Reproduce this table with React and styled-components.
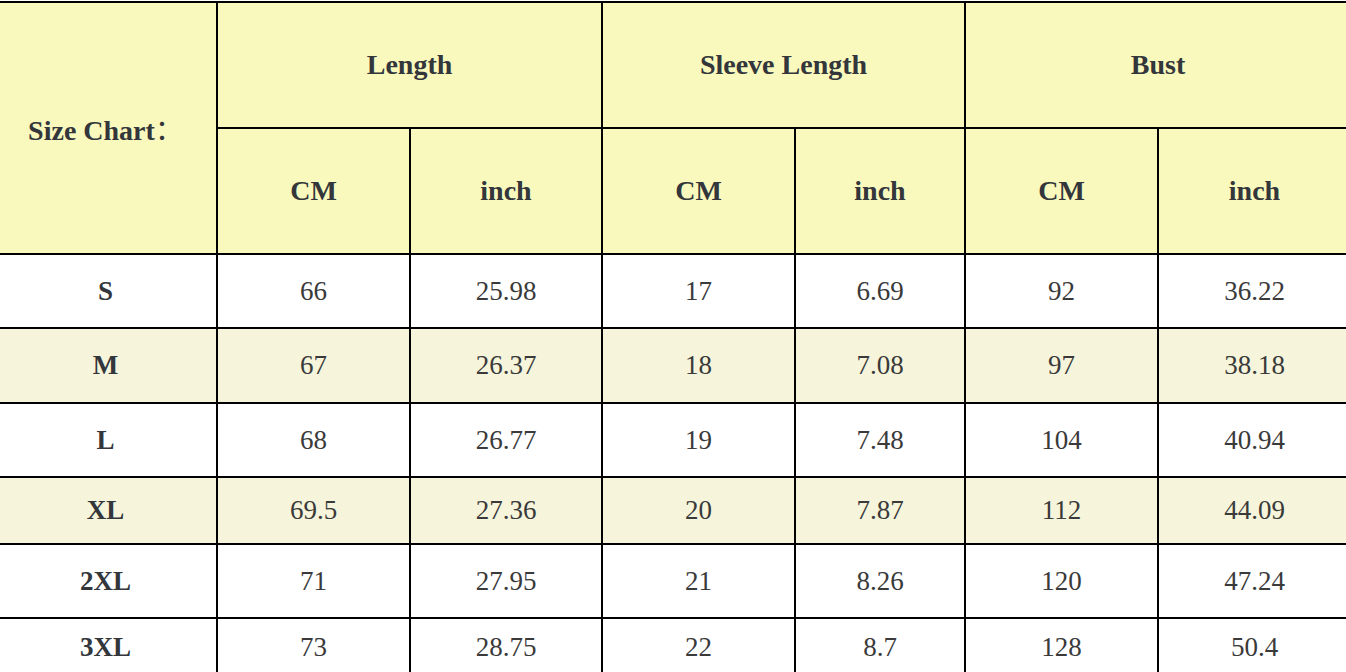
import React from 'react';
import styled, { createGlobalStyle } from 'styled-components';

const GlobalStyle = createGlobalStyle`
    html, body {
        margin: 0;
        padding: 0;
        background: #ffffff;
        overflow: hidden;
    }
    * {
        box-sizing: border-box;
    }
`;

const Page = styled.div`
    width: 1346px;
    height: 672px;
    overflow: hidden;
    padding-top: 1px;
    font-family: "Liberation Serif", "Noto Sans CJK SC", serif;
    color: #333333;
`;

const Table = styled.table`
    width: 1359px;
    min-width: 1359px;
    margin-left: -7px;
    border-collapse: separate;
    border-spacing: 0;
    table-layout: fixed;
    border-top: 2px solid #000;
    border-left: 2px solid #000;
`;

const Cell = styled.td`
    height: ${({ h }) => h}px;
    padding: 0;
    text-align: center;
    vertical-align: middle;
    border-right: 2px solid #000;
    border-bottom: 2px solid #000;
    background: ${({ bg }) => bg || '#ffffff'};
    font-size: ${({ head }) => (head ? '28px' : '27px')};
    font-weight: ${({ bold }) => (bold ? 700 : 400)};
    color: ${({ bold }) => (bold ? '#33363b' : '#3a3a3a')};
    white-space: nowrap;
`;

const Colon = styled.span`
    font-family: "Noto Sans CJK SC", sans-serif;
    font-weight: 400;
`;

const HEAD = '#faf9bd';
const ALT = '#f6f5dc';

const widths = [223, 193, 192, 193, 170, 193, 193];

const rows = [
    { size: 'S', h: 74, v: ['66', '25.98', '17', '6.69', '92', '36.22'] },
    { size: 'M', h: 75, v: ['67', '26.37', '18', '7.08', '97', '38.18'], alt: true },
    { size: 'L', h: 74, v: ['68', '26.77', '19', '7.48', '104', '40.94'] },
    { size: 'XL', h: 67, v: ['69.5', '27.36', '20', '7.87', '112', '44.09'], alt: true },
    { size: '2XL', h: 74, v: ['71', '27.95', '21', '8.26', '120', '47.24'] },
    { size: '3XL', h: 58, v: ['73', '28.75', '22', '8.7', '128', '50.4'] },
];

const groups = ['Length', 'Sleeve Length', 'Bust'];

const App = () => {
    return <Page>
        <GlobalStyle />
        <Table>
            <colgroup>
                {widths.map((w, i) => <col key={i} style={{ width: w }} />)}
            </colgroup>
            <thead>
                <tr>
                    <Cell as="th" rowSpan={2} h={252} bg={HEAD} head bold>
                        Size Chart<Colon>：</Colon>
                    </Cell>
                    {groups.map(g => (
                        <Cell as="th" key={g} colSpan={2} h={126} bg={HEAD} head bold>{g}</Cell>
                    ))}
                </tr>
                <tr>
                    {groups.map(g => (
                        <React.Fragment key={g}>
                            <Cell as="th" h={126} bg={HEAD} head bold>CM</Cell>
                            <Cell as="th" h={126} bg={HEAD} head bold>inch</Cell>
                        </React.Fragment>
                    ))}
                </tr>
            </thead>
            <tbody>
                {rows.map(r => (
                    <tr key={r.size}>
                        <Cell h={r.h} bg={r.alt ? ALT : null} bold>{r.size}</Cell>
                        {r.v.map((val, i) => (
                            <Cell key={i} h={r.h} bg={r.alt ? ALT : null}>{val}</Cell>
                        ))}
                    </tr>
                ))}
            </tbody>
        </Table>
    </Page>
}

export default App
